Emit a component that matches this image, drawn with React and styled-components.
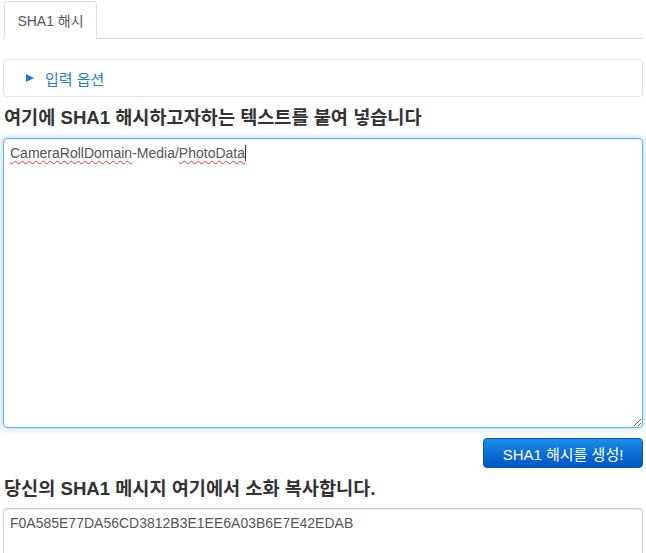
import React from "react";
import styled, { createGlobalStyle } from "styled-components";

const GlobalStyle = createGlobalStyle`
  body {
    margin: 0;
    background: #fff;
    font-family: "Liberation Sans", Arial, "Noto Sans CJK KR", sans-serif;
    color: #333;
  }
`;

const Page = styled.div`
  padding: 0 3px 0 3px;
  width: 640px;
`;

const TabBar = styled.div`
  display: flex;
  border-bottom: 1px solid #ddd;
  height: 38px;
`;

const Tab = styled.div`
  margin-left: 1px;
  margin-top: 1px;
  width: 93px;
  height: 38px;
  box-sizing: border-box;
  border: 1px solid #ddd;
  border-bottom-color: #fff;
  border-radius: 4px 4px 0 0;
  background: #fff;
  display: flex;
  align-items: center;
  justify-content: center;
  font-size: 14px;
  color: #555;
`;

const Options = styled.div`
  margin-top: 20px;
  height: 38px;
  box-sizing: border-box;
  border: 1px solid #e3e3e3;
  border-radius: 4px;
  display: flex;
  align-items: center;
  padding-left: 22px;
  gap: 11px;
  font-size: 15px;
  color: #2a7bbf;
`;

const Triangle = styled.span`
  width: 0;
  height: 0;
  border-top: 4.5px solid transparent;
  border-bottom: 4.5px solid transparent;
  border-left: 8px solid #1e78c2;
`;

const Heading = styled.h3`
  margin: 0;
  box-sizing: border-box;
  height: ${(p) => p.$h || 41}px;
  padding: 0 0 4px 1px;
  display: flex;
  align-items: center;
  font-size: 18.6px;
  font-weight: bold;
  color: #333;
`;

const Editor = styled.div`
  box-sizing: border-box;
  height: 290px;
  border: 1px solid #66afe9;
  border-radius: 4px;
  box-shadow: inset 0 1px 1px rgba(0, 0, 0, 0.075),
    0 0 6px rgba(102, 175, 233, 0.6);
  padding: 4px 6px;
  font-size: 14px;
  color: #555;
  resize: vertical;
  overflow: auto;
  line-height: 20px;
`;

const Misspelled = styled.span`
  text-decoration: underline wavy #e0393e;
  text-decoration-thickness: 1px;
  text-underline-offset: 2px;
`;

const Caret = styled.span`
  display: inline-block;
  width: 1px;
  height: 16px;
  background: #333;
  vertical-align: -3px;
`;

const ButtonRow = styled.div`
  display: flex;
  justify-content: flex-end;
  margin-top: 10px;
`;

const Button = styled.button`
  width: 160px;
  height: 30px;
  border: 1px solid #0a55b0;
  border-radius: 4px;
  background: linear-gradient(to bottom, #1c8ee6 0%, #0a6fd6 50%, #0257c4 100%);
  color: #fff;
  font-family: "Liberation Sans", Arial, "Noto Sans CJK KR", sans-serif;
  font-size: 15px;
  cursor: pointer;
  padding: 0;
`;

const Output = styled.div`
  box-sizing: border-box;
  height: 60px;
  border: 1px solid #ccc;
  border-radius: 4px;
  box-shadow: inset 0 1px 1px rgba(0, 0, 0, 0.075);
  padding: 4px 6px;
  font-size: 14px;
  line-height: 20px;
  color: #555;
`;

export default function App() {
  return (
    <>
      <GlobalStyle />
      <Page>
        <TabBar>
          <Tab>SHA1 해시</Tab>
        </TabBar>
        <Options>
          <Triangle />
          입력 옵션
        </Options>
        <Heading>여기에 SHA1 해시하고자하는 텍스트를 붙여 넣습니다</Heading>
        <Editor>
          <Misspelled>CameraRollDomain</Misspelled>-Media/
          <Misspelled>PhotoData</Misspelled>
          <Caret />
        </Editor>
        <ButtonRow>
          <Button>SHA1 해시를 생성!</Button>
        </ButtonRow>
        <Heading $h={40}>당신의 SHA1 메시지 여기에서 소화 복사합니다.</Heading>
        <Output>F0A585E77DA56CD3812B3E1EE6A03B6E7E42EDAB</Output>
      </Page>
    </>
  );
}
